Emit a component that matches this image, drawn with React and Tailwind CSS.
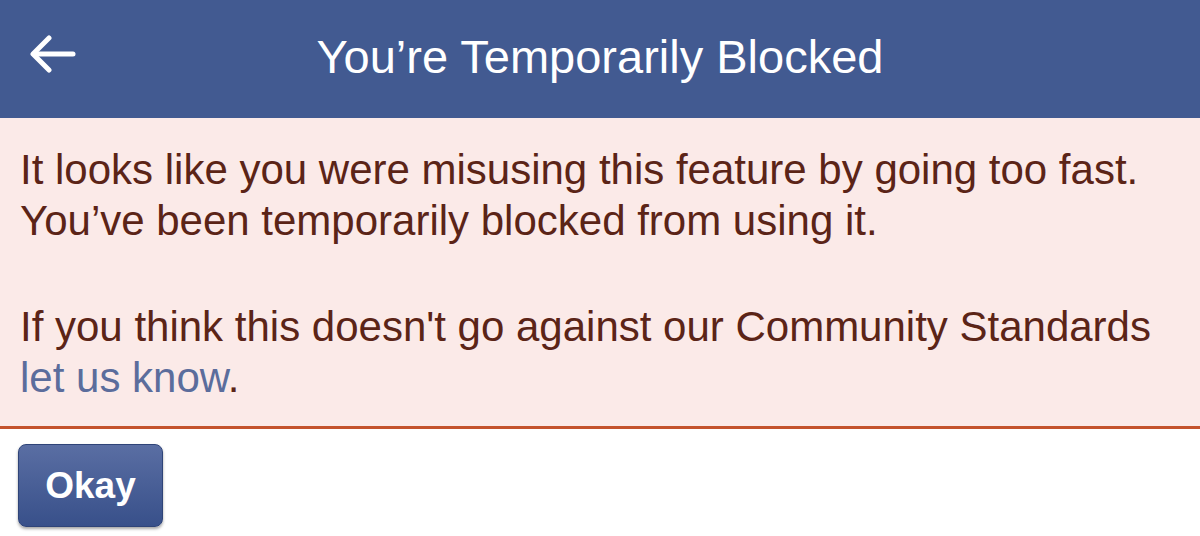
export default function App() {
  return (
    <div className="w-[1200px] h-[536px] bg-white overflow-hidden" style={{ fontFamily: '"Liberation Sans", Arial, sans-serif' }}>
      <header className="h-[118px] bg-[#425a91] flex items-center relative">
        <button className="absolute left-[30px] top-[35px] w-[46px] h-[38px] flex items-center justify-center">
          <svg width="46" height="38" viewBox="0 0 46 38" fill="none" stroke="white" strokeWidth="5" strokeLinecap="round" strokeLinejoin="round">
            <path d="M43 19H4" />
            <path d="M19 3L3 19L19 35" />
          </svg>
        </button>
        <h1 className="flex-1 text-center text-white text-[47px] leading-none pb-[6px]">You’re Temporarily Blocked</h1>
      </header>

      <section className="bg-[#fbeae8] border-b-[3px] border-[#c4532d] px-[20px] pt-[26px] pb-[23px] text-[#5b2417] text-[42px] leading-[51px]">
        <p>It looks like you were misusing this feature by going too fast.</p>
        <p>You’ve been temporarily blocked from using it.</p>
        <p className="mt-[55px]">If you think this doesn't go against our Community Standards</p>
        <p>
          <span className="text-[#5b6d9c]">let us know</span>.
        </p>
      </section>

      <div className="pt-[15px] pl-[18px]">
        <button className="w-[145px] h-[83px] rounded-[8px] bg-gradient-to-b from-[#5a6ea3] to-[#38508a] border border-[#2f4478] shadow-[0_2px_3px_rgba(0,0,0,0.35)] text-white text-[37px] font-bold">
          Okay
        </button>
      </div>
    </div>
  )
}
